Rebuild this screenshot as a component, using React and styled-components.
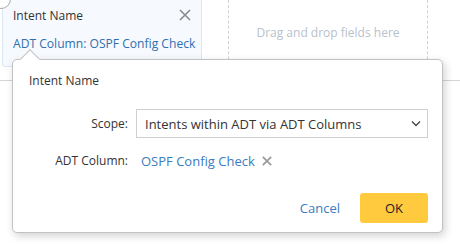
import React from "react"
import styled, { createGlobalStyle } from 'styled-components'

const GlobalStyle = createGlobalStyle`
body {
  margin: 0;
  background: #fff;
  font-family: "Open Sans", "Noto Sans", sans-serif;
  color: #333;
}
`

const Page = styled.div`
position: relative;
width: 460px;
height: 244px;
overflow: hidden;
`

const FieldRow = styled.div`
display: flex;
height: 80px;
border-bottom: 1px solid #d4d4d4;
`

const FieldCard = styled.div`
position: relative;
box-sizing: border-box;
width: 200px;
height: 67px;
margin-left: 2px;
padding: 5px 10px 0 10px;
background: #f6f9fe;
border: 1px solid #dbe7f5;
border-top: none;
border-radius: 0 0 3px 3px;
`

const CornerDot = styled.div`
position: absolute;
left: -12px;
top: -11px;
width: 18px;
height: 18px;
border-radius: 50%;
border: 1px solid #a9a9a9;
background: #fff;
`

const CardHead = styled.div`
display: flex;
justify-content: space-between;
align-items: center;
height: 20px;
font-size: 12px;
color: #333;
`

const CardValue = styled.div`
margin-top: 10px;
font-size: 12.1px;
color: #2f6fae;
white-space: nowrap;
`

const DropZone = styled.div`
box-sizing: border-box;
width: 200px;
margin-left: 26px;
padding-top: 24px;
border-left: 1px dashed #d0d0d0;
border-right: 1px dashed #d0d0d0;
text-align: center;
font-size: 12px;
color: #b9c1cc;
`

const Popover = styled.div`
position: absolute;
left: 12px;
top: 59px;
box-sizing: border-box;
width: 431px;
height: 174px;
padding: 12px 14px 9px 0;
background: #fff;
border: 1px solid #c2c2c2;
border-radius: 5px;
box-shadow: 2px 3px 8px rgba(0, 0, 0, 0.18);
display: flex;
flex-direction: column;

&::before {
  content: '';
  position: absolute;
  left: 10px;
  top: -8px;
  width: 14px;
  height: 14px;
  background: #fff;
  border-top: 1px solid #c2c2c2;
  border-left: 1px solid #c2c2c2;
  transform: rotate(45deg);
  box-sizing: border-box;
}
`

const PopTitle = styled.div`
padding-left: 16px;
font-size: 12px;
line-height: 18px;
`

const FormRow = styled.div`
display: grid;
grid-template-columns: 115px 1fr;
column-gap: ${props => props.gap}px;
align-items: center;
margin-top: ${props => props.top}px;
font-size: 12px;
`

const Label = styled.div`
text-align: right;
line-height: 18px;
`

const SelectBox = styled.div`
box-sizing: border-box;
height: 29px;
display: flex;
align-items: center;
justify-content: space-between;
padding: 0 6px 0 8px;
border: 1px solid #cfcfcf;
font-size: 13px;
color: #333;
`

const Chip = styled.div`
display: flex;
align-items: center;
gap: 7px;
line-height: 18px;
font-size: 13px;
color: #3a7cc0;
`

const Actions = styled.div`
display: flex;
justify-content: flex-end;
align-items: center;
gap: 20px;
margin-top: 23px;
`

const LinkButton = styled.button`
border: none;
background: none;
padding: 0;
font-family: inherit;
font-size: 13px;
color: #3a7cc0;
`

const PrimaryButton = styled.button`
width: 68px;
height: 30px;
border: none;
border-radius: 3px;
background: #ffca3e;
font-family: inherit;
font-size: 13px;
color: #222;
`

const Cross = ({ size, color, width }) => (
  <svg width={size} height={size} viewBox="0 0 12 12">
    <path d="M1 1 L11 11 M11 1 L1 11" stroke={color} strokeWidth={width} fill="none" />
  </svg>
)

const Chevron = () => (
  <svg width="10" height="7" viewBox="0 0 10 7">
    <polyline points="1,1.5 5,5.5 9,1.5" stroke="#444" strokeWidth="1.3" fill="none" />
  </svg>
)

const App = () => (
  <Page>
    <GlobalStyle />
    <FieldRow>
      <FieldCard>
        <CornerDot />
        <CardHead>
          <span>Intent Name</span>
          <Cross size={12} color="#8c8c8c" width={1.6} />
        </CardHead>
        <CardValue>ADT Column: OSPF Config Check</CardValue>
      </FieldCard>
      <DropZone>Drag and drop fields here</DropZone>
    </FieldRow>

    <Popover>
      <PopTitle>Intent Name</PopTitle>
      <FormRow top={19} gap={8}>
        <Label>Scope:</Label>
        <SelectBox>
          <span>Intents within ADT via ADT Columns</span>
          <Chevron />
        </SelectBox>
      </FormRow>
      <FormRow top={14} gap={13}>
        <Label>ADT Column:</Label>
        <Chip>
          <span>OSPF Config Check</span>
          <Cross size={10} color="#999" width={2} />
        </Chip>
      </FormRow>
      <Actions>
        <LinkButton>Cancel</LinkButton>
        <PrimaryButton>OK</PrimaryButton>
      </Actions>
    </Popover>
  </Page>
)

export default App
